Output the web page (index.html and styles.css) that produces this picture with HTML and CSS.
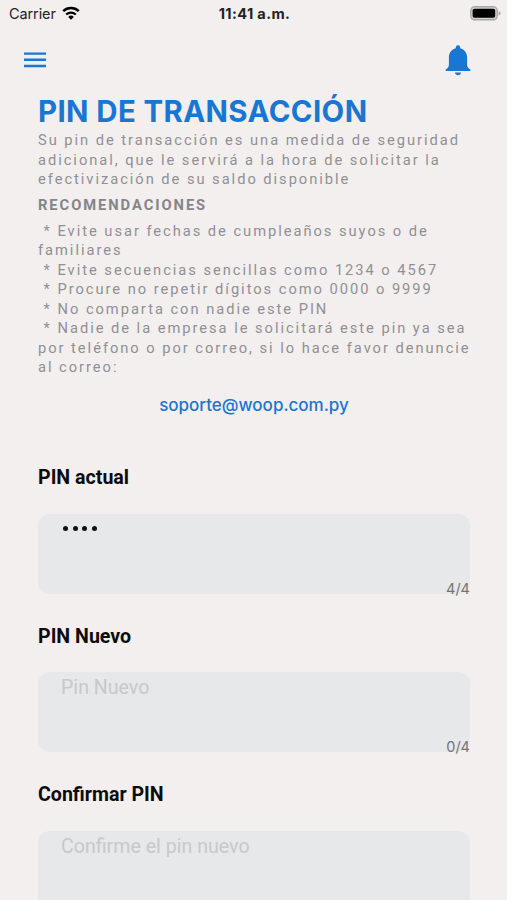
FILE: index.html
```html
<!DOCTYPE html>
<html lang="es">
<head>
    <meta charset="UTF-8">
    <meta name="viewport" content="width=device-width, initial-scale=1.0">
    <title>PIN de transacción</title>
    <link rel="stylesheet" href="styles.css">
</head>
<body>
    <div class="status-bar">
        <div class="carrier">
            <span class="carrier-name">Carrier</span>
            <svg class="wifi" width="18" height="14" viewBox="0 0 18 14">
                <path d="M1.2 5.1a11.3 11.3 0 0 1 15.6 0" fill="none" stroke="#000" stroke-width="2.5"/>
                <path d="M4.2 8.5a7 7 0 0 1 9.6 0" fill="none" stroke="#000" stroke-width="2.2"/>
                <path d="M9 13.7L6.2 10.9a4 4 0 0 1 5.6 0z"/>
            </svg>
        </div>
        <span class="time">11:41 a.m.</span>
        <svg class="battery" width="31" height="15" viewBox="0 0 31 15">
            <rect x="0.8" y="0.8" width="26.4" height="13" rx="3.8" fill="#d4d2d1" stroke="#aaa8a7" stroke-width="1.4"/>
            <rect x="2.6" y="2.8" width="22.6" height="9" rx="1.8"/>
            <path d="M28.6 5.2q2 .6 2 2.1t-2 2.1z" fill="#aaa8a7"/>
        </svg>
    </div>

    <div class="nav-bar">
        <svg class="menu" width="22" height="16" viewBox="0 0 22 16">
            <path d="M0 1.6h22M0 7.8h22M0 14h22" stroke="#1976d2" stroke-width="2.4"/>
        </svg>
        <svg class="bell" width="26" height="31" viewBox="0 0 26 31">
            <path d="M13 .3a2.2 2.2 0 0 1 2.2 2.3v.7c4.2 1.2 6.9 4.7 6.9 9.2v7.2c0 2.2 1.3 3.5 2.9 4.6.8.7.6 1.7-.3 1.7H1.3c-.9 0-1.1-1-.3-1.7 1.6-1.1 2.9-2.4 2.9-4.6v-7.2c0-4.5 2.7-8 6.9-9.2v-.7A2.2 2.2 0 0 1 13 .3z" fill="#1976d2"/>
            <path d="M10 27.4h6c-.2 1.8-1.4 2.8-3 2.8s-2.8-1-3-2.8z" fill="#1976d2"/>
        </svg>
    </div>

    <div class="content">
        <h1 class="title">PIN DE TRANSACCIÓN</h1>
        <p class="text">Su pin de transacción es una medida de seguridad adicional, que le servirá a la hora de solicitar la efectivización de su saldo disponible</p>
        <h2 class="subtitle">RECOMENDACIONES</h2>
        <p class="text"> * Evite usar fechas de cumpleaños suyos o de familiares</p>
        <p class="text"> * Evite secuencias sencillas como 1234 o 4567</p>
        <p class="text"> * Procure no repetir dígitos como 0000 o 9999</p>
        <p class="text"> * No comparta con nadie este PIN</p>
        <p class="text"> * Nadie de la empresa le solicitará este pin ya sea por teléfono o por correo, si lo hace favor denuncie al correo:</p>
        <a class="email">soporte@woop.com.py</a>

        <div class="field">
            <label class="label">PIN actual</label>
            <div class="input">
                <span class="dots"><i></i><i></i><i></i><i></i></span>
                <span class="counter">4/4</span>
            </div>
        </div>
        <div class="field">
            <label class="label">PIN Nuevo</label>
            <div class="input">
                <span class="placeholder">Pin Nuevo</span>
                <span class="counter">0/4</span>
            </div>
        </div>
        <div class="field">
            <label class="label">Confirmar PIN</label>
            <div class="input">
                <span class="placeholder">Confirme el pin nuevo</span>
            </div>
        </div>
    </div>
</body>
</html>
```
FILE: styles.css
```css
* {
    box-sizing: border-box;
}

body {
    margin: 0;
    height: 900px;
    overflow: hidden;
    background-color: #f2efee;
    font-family: Roboto, "Liberation Sans", sans-serif;
}

.status-bar {
    display: grid;
    grid-template-columns: 1fr auto 1fr;
    align-items: center;
    height: 27px;
    padding: 0 6px 0 9px;
    font-family: Inter, "Liberation Sans", sans-serif;
    font-size: 14.5px;
    color: #222;
}

.carrier {
    display: flex;
    align-items: center;
    gap: 6px;
}

.carrier-name {
    letter-spacing: -0.1px;
}

.wifi {
    margin-top: -2px;
}

.time {
    margin-right: 1px;
    font-weight: 650;
    letter-spacing: 0.4px;
}

.battery {
    justify-self: end;
}

.nav-bar {
    display: flex;
    justify-content: space-between;
    align-items: center;
    height: 66px;
    padding: 0 36px 0 24px;
}

.content {
    padding: 0 37px 0 38px;
}

.title {
    margin: 0;
    font-family: Inter, "Liberation Sans", sans-serif;
    font-size: 29.4px;
    font-weight: 650;
    line-height: 38px;
    letter-spacing: 0.4px;
    white-space: nowrap;
    color: #1976d2;
}

.text {
    margin: 0 -5px 0 0;
    font-size: 14.7px;
    line-height: 19.55px;
    letter-spacing: 1.96px;
    white-space: pre-wrap;
    color: #919094;
}

.subtitle {
    margin: 5px 0 7px;
    font-size: 14.7px;
    font-weight: 700;
    line-height: 20px;
    letter-spacing: 1.96px;
    color: #858489;
}

.email {
    display: block;
    margin-top: 16px;
    text-align: center;
    font-family: Inter, "Liberation Sans", sans-serif;
    font-size: 17px;
    font-weight: 500;
    line-height: 22px;
    color: #1976d2;
}

.field {
    height: 158.6px;
}

.field:last-child {
    height: 129px;
}

.email + .field {
    margin-top: 50px;
}

.label {
    display: block;
    margin-bottom: 23.5px;
    font-size: 19.6px;
    font-weight: 700;
    line-height: 24px;
    color: #0c0c0c;
}

.input {
    display: flex;
    flex-direction: column;
    justify-content: space-between;
    height: 80px;
    padding-left: 23px;
    border-radius: 12px;
    background-color: #e6e8e9;
}

.dots {
    display: flex;
    gap: 4.5px;
    padding: 12.5px 0 0 2px;
}

.dots i {
    width: 5px;
    height: 5px;
    border-radius: 50%;
    background-color: #111;
}

.placeholder {
    padding-top: 3.8px;
    font-size: 19.6px;
    line-height: 23px;
    color: #c8c9cb;
}

.counter {
    align-self: flex-end;
    margin-bottom: -5px;
    font-family: Inter, "Liberation Sans", sans-serif;
    font-size: 14.5px;
    line-height: 20px;
    color: #737373;
}
```
